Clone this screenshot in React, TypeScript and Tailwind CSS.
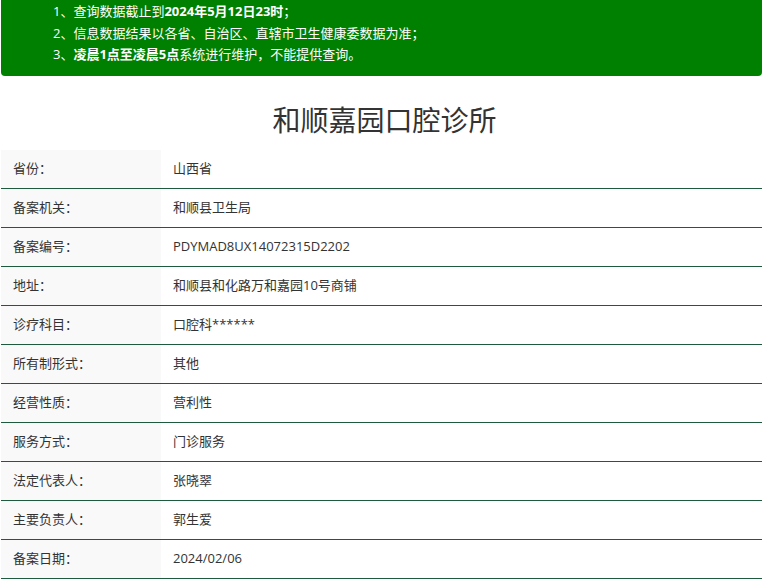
const rows: [string, string][] = [
  ['省份：', '山西省'],
  ['备案机关：', '和顺县卫生局'],
  ['备案编号：', 'PDYMAD8UX14072315D2202'],
  ['地址：', '和顺县和化路万和嘉园10号商铺'],
  ['诊疗科目：', '口腔科******'],
  ['所有制形式：', '其他'],
  ['经营性质：', '营利性'],
  ['服务方式：', '门诊服务'],
  ['法定代表人：', '张晓翠'],
  ['主要负责人：', '郭生爱'],
  ['备案日期：', '2024/02/06'],
];

export default function App() {
  return (
    <div className="w-[769px] h-[584px] overflow-hidden bg-white text-[13px] text-[#333]" style={{ fontFamily: '"Open Sans", "Noto Sans CJK SC", sans-serif' }}>
      <div className="ml-[1px] w-[761px] h-[76px] bg-[#008000] rounded-b-[4px] text-white pl-[52px] pt-[1px] leading-[21.5px]">
        <div>1、查询数据截止到<b>2024年5月12日23时</b>；</div>
        <div>2、信息数据结果以各省、自治区、直辖市卫生健康委数据为准；</div>
        <div>3、<b>凌晨1点至凌晨5点</b>系统进行维护，不能提供查询。</div>
      </div>
      <h1 className="text-center text-[28px] leading-[36px] mt-[26px] mb-[12px] text-[#333]">和顺嘉园口腔诊所</h1>
      <div className="ml-[1px] w-[761px]">
        {rows.map(([k, v]) => (
          <div key={k} className="flex h-[39px] border-b border-[#1d5a3e]">
            <div className="w-[160px] bg-[#f9f9f9] pl-[12px] flex items-center">{k}</div>
            <div className="flex-1 pl-[12px] flex items-center">{v}</div>
          </div>
        ))}
      </div>
    </div>
  );
}
